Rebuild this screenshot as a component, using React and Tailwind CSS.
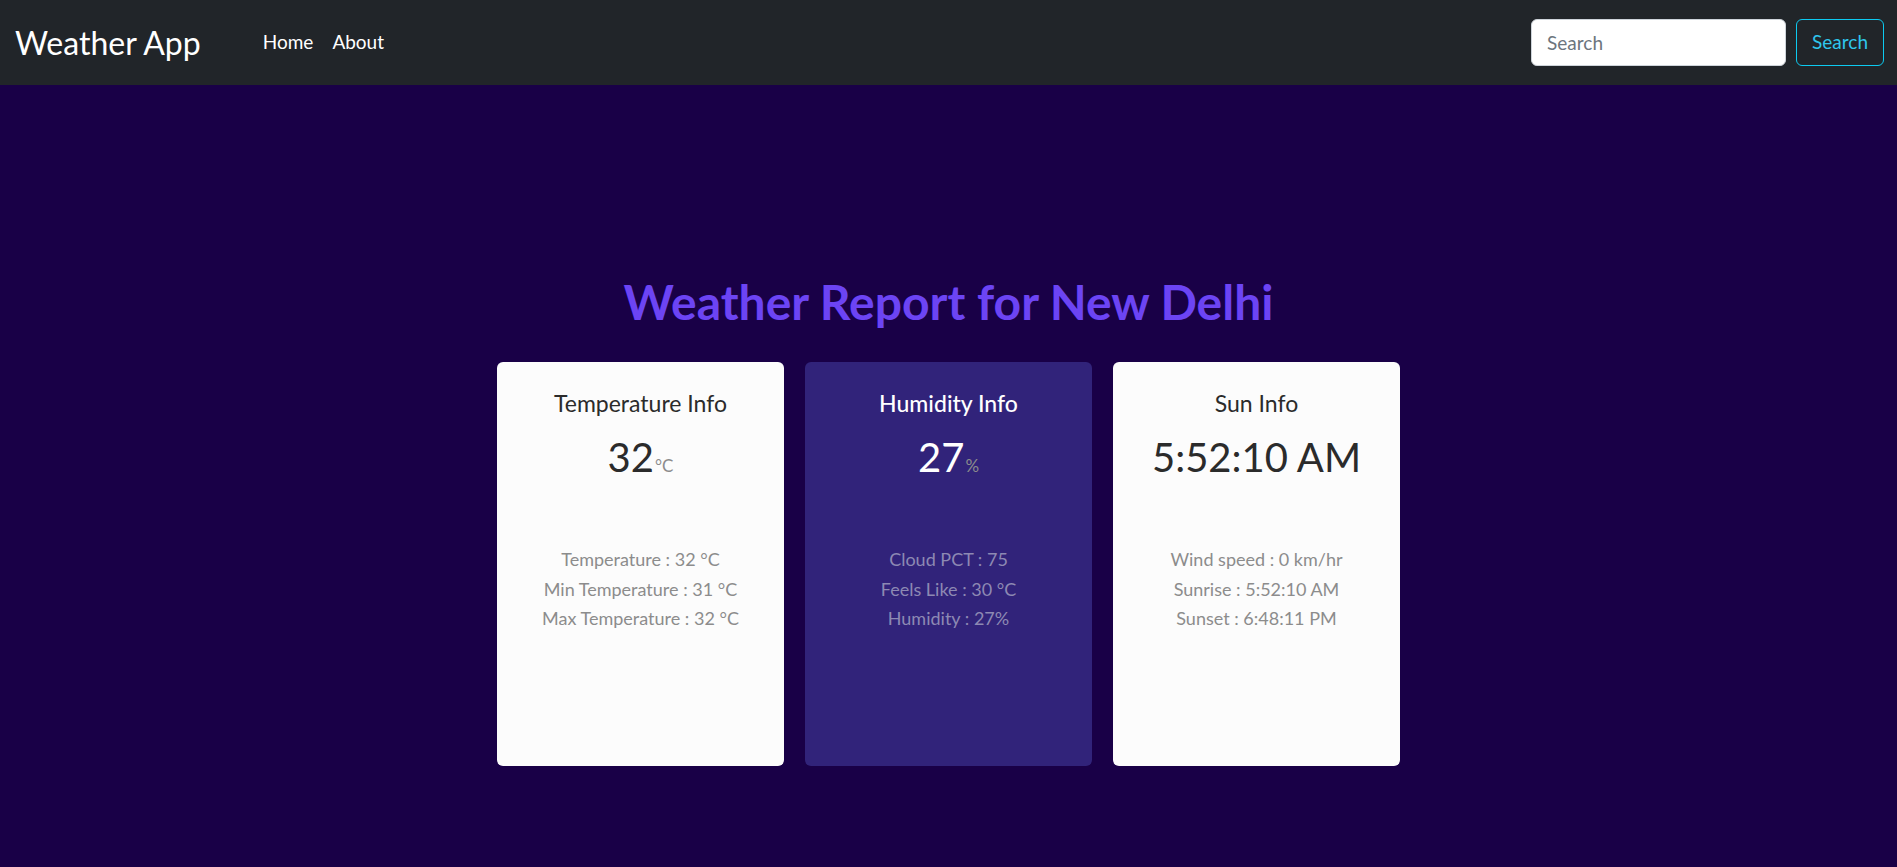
export default function App() {
  return (
    <div className="min-h-[867px] bg-[#190047] font-['Lato','Noto_Sans',sans-serif]">
      <nav className="h-[85px] bg-[#212529] flex items-center pl-[15px] pr-[13px]">
        <span className="text-[32px] text-white leading-none mr-[62px]">Weather App</span>
        <div className="flex gap-[19px] text-[19px] text-white">
          <span>Home</span>
          <span>About</span>
        </div>
        <div className="ml-auto flex gap-[10px]">
          <input
            placeholder="Search"
            className="w-[255px] h-[47px] rounded-[6px] bg-white px-[15px] text-[19px] placeholder-[#6c757d] outline-none border border-[#ced4da]"
          />
          <button className="h-[47px] px-[15px] rounded-[6px] border border-[#0dcaf0] text-[#2fc6ec] text-[19px]">
            Search
          </button>
        </div>
      </nav>
      <main className="flex flex-col items-center pt-[193px]">
        <h1 className="text-[48px] font-bold text-[#6c44f4] leading-[48px]">Weather Report for New Delhi</h1>
        <div className="flex gap-[21px] mt-[36px]">
          <Card
            bg="bg-[#fcfcfc]"
            titleColor="text-[#2b2b2b]"
            valueColor="text-[#2b2b2b]"
            detailColor="text-[#8c8c8c]"
            title="Temperature Info"
            value="32"
            unit="°C"
            details={["Temperature : 32 °C", "Min Temperature : 31 °C", "Max Temperature : 32 °C"]}
          />
          <Card
            bg="bg-[#31237a]"
            titleColor="text-white font-medium"
            valueColor="text-white"
            detailColor="text-[#8d89b3]"
            title="Humidity Info"
            value="27"
            unit="%"
            details={["Cloud PCT : 75", "Feels Like : 30 °C", "Humidity : 27%"]}
          />
          <Card
            bg="bg-[#fcfcfc]"
            titleColor="text-[#2b2b2b]"
            valueColor="text-[#2b2b2b]"
            detailColor="text-[#8c8c8c]"
            title="Sun Info"
            value="5:52:10 AM"
            unit=""
            details={["Wind speed : 0 km/hr", "Sunrise : 5:52:10 AM", "Sunset : 6:48:11 PM"]}
          />
        </div>
      </main>
    </div>
  );
}

function Card({ bg, titleColor, valueColor, detailColor, title, value, unit, details }) {
  return (
    <div className={`w-[287px] h-[404px] rounded-[6px] ${bg} flex flex-col items-center pt-[27px]`}>
      <div className={`text-[23px] leading-[28px] ${titleColor}`}>{title}</div>
      <div className={`mt-[15px] leading-[50px] ${valueColor}`}>
        <span className="text-[40px]">{value}</span>
        {unit && <span className="text-[17px] text-[#8c8c8c] ml-[1px]">{unit}</span>}
      </div>
      <div className={`mt-[54px] flex flex-col items-center text-[18px] leading-[29.5px] ${detailColor}`}>
        {details.map((d) => (
          <div key={d}>{d}</div>
        ))}
      </div>
    </div>
  );
}
